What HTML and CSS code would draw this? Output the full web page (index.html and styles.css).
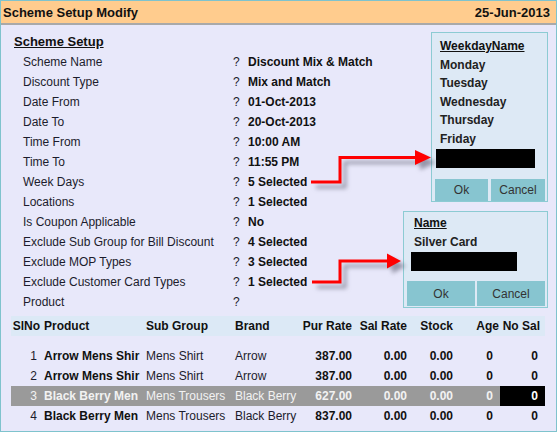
FILE: index.html
```html
<!DOCTYPE html>
<html lang="en">

<head>
    <meta charset="UTF-8">
    <title>Scheme Setup Modify</title>
    <link rel="stylesheet" href="styles.css">
</head>

<body>
    <div class="window">
        <div class="titlebar">
            <span>Scheme Setup Modify</span>
            <span>25-Jun-2013</span>
        </div>

        <div class="section-title">Scheme Setup</div>

        <div class="fields">
            <div class="label">Scheme Name</div><div class="q">?</div><div class="value">Discount Mix &amp; Match</div>
            <div class="label">Discount Type</div><div class="q">?</div><div class="value">Mix and Match</div>
            <div class="label">Date From</div><div class="q">?</div><div class="value">01-Oct-2013</div>
            <div class="label">Date To</div><div class="q">?</div><div class="value">20-Oct-2013</div>
            <div class="label">Time From</div><div class="q">?</div><div class="value">10:00 AM</div>
            <div class="label">Time To</div><div class="q">?</div><div class="value">11:55 PM</div>
            <div class="label">Week Days</div><div class="q">?</div><div class="value">5 Selected</div>
            <div class="label">Locations</div><div class="q">?</div><div class="value">1 Selected</div>
            <div class="label">Is Coupon Applicable</div><div class="q">?</div><div class="value">No</div>
            <div class="label">Exclude Sub Group for Bill Discount</div><div class="q">?</div><div class="value">4 Selected</div>
            <div class="label">Exclude MOP Types</div><div class="q">?</div><div class="value">3 Selected</div>
            <div class="label">Exclude Customer Card Types</div><div class="q">?</div><div class="value">1 Selected</div>
            <div class="label">Product</div><div class="q">?</div><div class="value"></div>
        </div>

        <div class="grid">
            <div class="grid-row grid-head">
                <div class="c-no">SlNo</div>
                <div class="c-prod">Product</div>
                <div class="c-sub">Sub Group</div>
                <div class="c-brand">Brand</div>
                <div class="c-num">Pur Rate</div>
                <div class="c-num">Sal Rate</div>
                <div class="c-num">Stock</div>
                <div class="c-age">Age</div>
                <div class="c-nosal">No Sal</div>
            </div>
            <div class="grid-body">
                <div class="grid-row">
                    <div class="c-no">1</div>
                    <div class="c-prod">Arrow Mens Shir</div>
                    <div class="c-sub">Mens Shirt</div>
                    <div class="c-brand">Arrow</div>
                    <div class="c-num">387.00</div>
                    <div class="c-num">0.00</div>
                    <div class="c-num">0.00</div>
                    <div class="c-age">0</div>
                    <div class="c-nosal">0</div>
                </div>
                <div class="grid-row">
                    <div class="c-no">2</div>
                    <div class="c-prod">Arrow Mens Shir</div>
                    <div class="c-sub">Mens Shirt</div>
                    <div class="c-brand">Arrow</div>
                    <div class="c-num">387.00</div>
                    <div class="c-num">0.00</div>
                    <div class="c-num">0.00</div>
                    <div class="c-age">0</div>
                    <div class="c-nosal">0</div>
                </div>
                <div class="grid-row selected">
                    <div class="c-no">3</div>
                    <div class="c-prod">Black Berry Men</div>
                    <div class="c-sub">Mens Trousers</div>
                    <div class="c-brand">Black Berry</div>
                    <div class="c-num">627.00</div>
                    <div class="c-num">0.00</div>
                    <div class="c-num">0.00</div>
                    <div class="c-age">0</div>
                    <div class="c-nosal current">0</div>
                </div>
                <div class="grid-row">
                    <div class="c-no">4</div>
                    <div class="c-prod">Black Berry Men</div>
                    <div class="c-sub">Mens Trousers</div>
                    <div class="c-brand">Black Berry</div>
                    <div class="c-num">837.00</div>
                    <div class="c-num">0.00</div>
                    <div class="c-num">0.00</div>
                    <div class="c-age">0</div>
                    <div class="c-nosal">0</div>
                </div>
            </div>
        </div>

        <!-- pick list popups -->
        <div class="popup popup-weekday">
            <div class="popup-list">
                <div class="popup-head">WeekdayName</div>
                <div>Monday</div>
                <div>Tuesday</div>
                <div>Wednesday</div>
                <div>Thursday</div>
                <div>Friday</div>
            </div>
            <div class="popup-input"></div>
            <div class="popup-buttons">
                <button class="popup-btn">Ok</button>
                <button class="popup-btn">Cancel</button>
            </div>
        </div>

        <div class="popup popup-card">
            <div class="popup-list">
                <div class="popup-head">Name</div>
                <div>Silver Card</div>
            </div>
            <div class="popup-input"></div>
            <div class="popup-buttons">
                <button class="popup-btn">Ok</button>
                <button class="popup-btn">Cancel</button>
            </div>
        </div>

        <svg class="arrows" width="557" height="432" viewBox="0 0 557 432">
            <g class="arrow">
                <polyline points="311,182 340,182 340,157.5 417,157.5" fill="none" stroke="#ff0000" stroke-width="3"/>
                <polygon points="415,150 431,157.5 415,165" fill="#ff0000"/>
            </g>
            <g class="arrow">
                <polyline points="312,282 340,282 340,261 389,261" fill="none" stroke="#ff0000" stroke-width="3"/>
                <polygon points="387,253.5 401,261 387,268.5" fill="#ff0000"/>
            </g>
        </svg>
    </div>
</body>

</html>
```

FILE: styles.css
```css
body {
    margin: 0;
    font-family: "Liberation Sans", Arial, sans-serif;
    font-size: 12px;
    color: #1c1c2c;
}

.window {
    position: relative;
    width: 557px;
    height: 432px;
    box-sizing: border-box;
    border: 1px solid #7fc3cd;
    background-color: #e8e8fa;
    overflow: hidden;
}

.titlebar {
    display: flex;
    justify-content: space-between;
    height: 21px;
    padding: 1px 6px 0 2px;
    line-height: 22px;
    background-color: #ffcc8e;
    border-bottom: 2px solid #a9a9a9;
    font-size: 13px;
    font-weight: bold;
    color: #111;
}

.section-title {
    margin: 7px 0 0 13px;
    line-height: 20px;
    font-size: 13px;
    font-weight: bold;
    text-decoration: underline;
    color: #111;
}

.fields {
    display: grid;
    grid-template-columns: 210px 15px auto;
    grid-auto-rows: 20px;
    line-height: 20px;
    padding-left: 22px;
}

.value {
    font-weight: bold;
    color: #111;
}

/* product grid */
.grid {
    width: 534px;
    margin: 4px 0 0 10px;
}

.grid-row {
    display: grid;
    grid-template-columns: 32px 102px 88px 66px 54px 55px 46px 46px 45px;
    height: 20px;
    line-height: 20px;
    white-space: nowrap;
}

.grid-row div {
    overflow: hidden;
}

.grid-head {
    background-color: #dce9f6;
    font-weight: bold;
    color: #111;
}

.grid-body {
    padding-top: 10px;
}

.grid-body .grid-row {
    font-weight: bold;
    color: #111;
}

.grid-body .c-no,
.grid-body .c-sub,
.grid-body .c-brand {
    font-weight: normal;
    color: #1c1c2c;
}

.grid-row.selected {
    background-color: #9a9a9a;
}

.grid-row.selected div {
    color: #f2f2f2;
}

.grid-row.selected .c-nosal.current {
    background-color: #000;
    color: #fff;
}

.c-no {
    text-align: right;
    padding-right: 3px;
}

.grid-body .c-no {
    padding-right: 6px;
}

.c-prod {
    padding-left: 1px;
}

.c-sub {
    padding-left: 1px;
}

.c-brand {
    padding-left: 2px;
}

.c-num {
    text-align: right;
    padding-right: 1px;
}

.c-age {
    text-align: right;
    padding-right: 1px;
}

.c-nosal {
    text-align: right;
    padding-right: 5px;
}

.grid-body .c-age {
    padding-right: 7px;
}

.grid-body .c-nosal {
    padding-right: 7px;
}

/* popups */
.popup {
    position: absolute;
    box-sizing: border-box;
    background-color: #dde9f5;
    border: 1px solid #8ccbd3;
    font-weight: bold;
    color: #222;
}

.popup-weekday {
    left: 430px;
    top: 31px;
    width: 117px;
    padding: 4px 2px 0 3px;
}

.popup-weekday .popup-list {
    line-height: 18.6px;
    padding-left: 5px;
}

.popup-weekday .popup-input {
    width: 99px;
    margin: 0 0 11px 1px;
}

.popup-weekday .popup-btn {
    width: 53px;
    height: 22px;
}

.popup-weekday .popup-btn + .popup-btn {
    width: 54px;
}

.popup-card {
    left: 402px;
    top: 210px;
    width: 145px;
    padding: 2px 2px 1px 3px;
}

.popup-card .popup-list {
    line-height: 19px;
    padding-left: 7px;
}

.popup-card .popup-input {
    width: 106px;
    margin: 0 0 10px 4px;
}

.popup-card .popup-buttons {
    gap: 2px;
}

.popup-card .popup-btn {
    width: 68px;
    height: 25px;
}

.popup-head {
    text-decoration: underline;
    color: #111;
}

.popup-input {
    height: 19px;
    background-color: #000;
}

.popup-buttons {
    display: flex;
    gap: 3px;
}

.popup-btn {
    padding: 0;
    border: none;
    background-color: #87c5d0;
    font-family: "Liberation Sans", Arial, sans-serif;
    font-size: 12px;
    color: #333;
}

.arrows {
    position: absolute;
    left: -1px;
    top: -1px;
    pointer-events: none;
}

.arrow {
    filter: drop-shadow(5px 5px 2px rgba(80, 80, 100, 0.55));
}
```
